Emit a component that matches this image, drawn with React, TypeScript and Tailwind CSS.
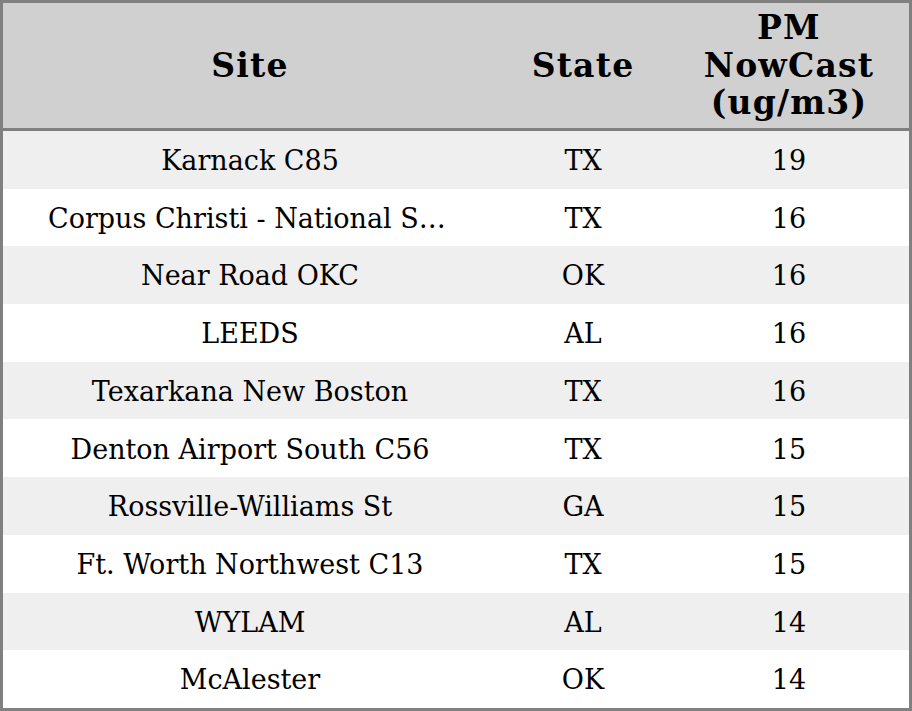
const ROWS = [
  { site: "Karnack C85", state: "TX", pm: 19 },
  { site: "Corpus Christi - National Seashore", state: "TX", pm: 16 },
  { site: "Near Road OKC", state: "OK", pm: 16 },
  { site: "LEEDS", state: "AL", pm: 16 },
  { site: "Texarkana New Boston", state: "TX", pm: 16 },
  { site: "Denton Airport South C56", state: "TX", pm: 15 },
  { site: "Rossville-Williams St", state: "GA", pm: 15 },
  { site: "Ft. Worth Northwest C13", state: "TX", pm: 15 },
  { site: "WYLAM", state: "AL", pm: 14 },
  { site: "McAlester", state: "OK", pm: 14 },
]

const COLS = "grid grid-cols-[494px_172px_240px]"

export default function App() {
  return (
    <div
      className="w-[912px] h-[711px] border-[3px] border-[#808080] bg-white text-black"
      style={{ fontFamily: '"DejaVu Serif", serif' }}
    >
      {/* Header */}
      <div className={`${COLS} h-[128px] bg-[#d0d0d0] border-b-[3px] border-[#808080] font-bold text-[33px] leading-[37.5px] tracking-[1.2px]`}>
        <div className="flex items-center justify-center">Site</div>
        <div className="flex items-center justify-center">State</div>
        <div className="flex items-center justify-center text-center">
          PM
          <br />
          NowCast
          <br />
          (ug/m3)
        </div>
      </div>

      {/* Rows */}
      <div className="flex flex-col text-[27px]">
        {ROWS.map((r, i) => (
          <div
            key={i}
            className={`${COLS} h-[57.7px] pt-[3px] items-center ${i % 2 === 0 ? "bg-[#efefef]" : "bg-white"}`}
          >
            <div className="px-[45px] text-center truncate">{r.site}</div>
            <div className="text-center">{r.state}</div>
            <div className="text-center">{r.pm}</div>
          </div>
        ))}
      </div>
    </div>
  )
}
